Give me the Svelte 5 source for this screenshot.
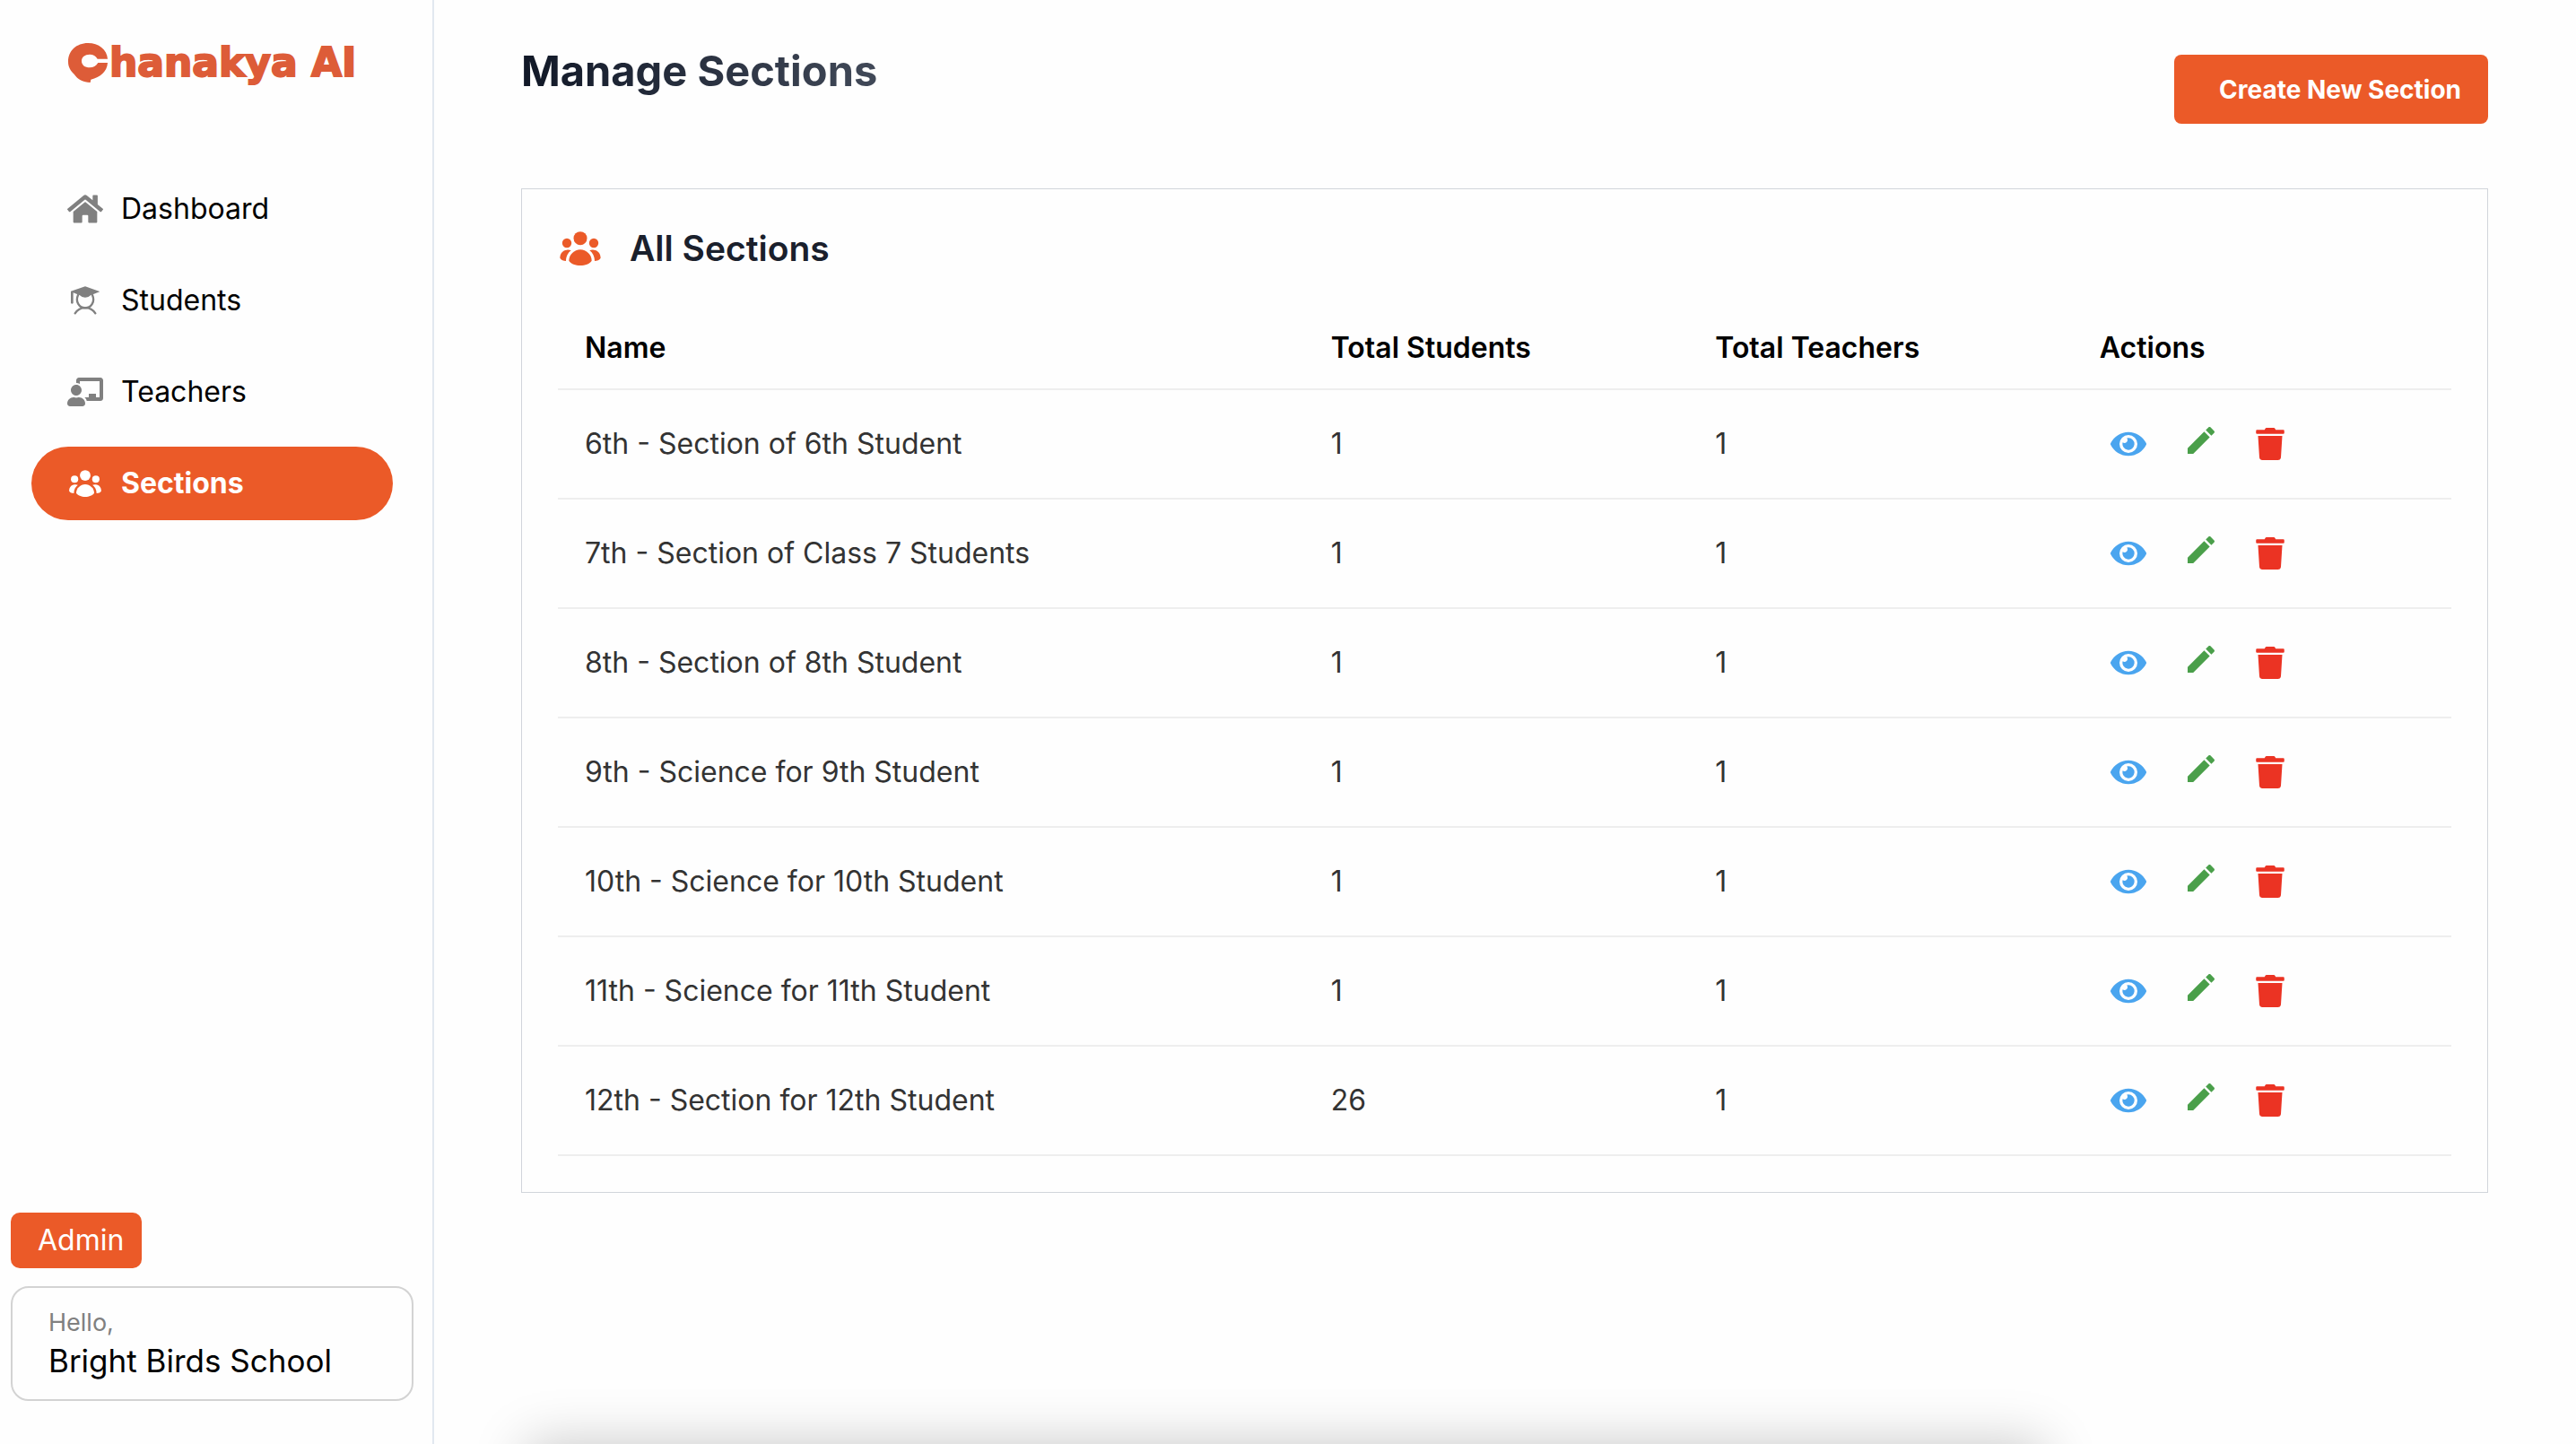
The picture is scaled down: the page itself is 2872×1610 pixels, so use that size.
<script>
  const nav = [
    { label: 'Dashboard', icon: 'home' },
    { label: 'Students', icon: 'student' },
    { label: 'Teachers', icon: 'teacher' },
    { label: 'Sections', icon: 'group', active: true },
  ];

  const sections = [
    { name: '6th - Section of 6th Student', students: 1, teachers: 1 },
    { name: '7th - Section of Class 7 Students', students: 1, teachers: 1 },
    { name: '8th - Section of 8th Student', students: 1, teachers: 1 },
    { name: '9th - Science for 9th Student', students: 1, teachers: 1 },
    { name: '10th - Science for 10th Student', students: 1, teachers: 1 },
    { name: '11th - Science for 11th Student', students: 1, teachers: 1 },
    { name: '12th - Section for 12th Student', students: 26, teachers: 1 },
  ];
</script>

{#snippet group()}
  <svg class="group" viewBox="0 0 136 114" fill="currentColor" aria-hidden="true">
    <circle cx="68" cy="23" r="22.5" />
    <circle cx="23" cy="39" r="15.5" />
    <circle cx="113" cy="39" r="15.5" />
    <path d="M68 61C48 61 30 78 30 98C36 108 52 114 68 114C84 114 100 108 106 98C106 78 88 61 68 61Z" />
    <path d="M37 64C33 62 28 61 23 62C9 63 0 74 0 89C4 96 12 98 20 99C20 84 27 71 37 64Z" />
    <path d="M99 64C103 62 108 61 113 62C127 63 136 74 136 89C132 96 124 98 116 99C116 84 109 71 99 64Z" />
  </svg>
{/snippet}

<div class="app">
  <aside class="sidebar">
    <a class="logo" href="#home" aria-label="Chanakya AI">
      <svg viewBox="0 0 132 132" aria-hidden="true">
        <path fill="#dd5c38" d="M66 0C28 0 0 26 0 62C0 80 8 92 20 104C32 122 50 130 74 132L76 122C108 114 130 96 132 66L100 66C94 76 84 82 72 82C56 82 45 74 45 60C45 47 56 38 72 38C84 38 92 43 98 53L132 53C130 22 102 0 66 0Z" />
      </svg>
      <span>hanakya AI</span>
    </a>

    <nav>
      {#each nav as item}
        <a href="#{item.label.toLowerCase()}" class:active={item.active} aria-current={item.active ? 'page' : undefined}>
          <span class="nav-icon">
            {#if item.icon === 'home'}
              <svg width="40" height="36" viewBox="0 0 576 512" fill="currentColor" aria-hidden="true"><path d="M280.37 148.26L96 300.11V464a16 16 0 0 0 16 16l112.06-.29a16 16 0 0 0 15.92-16V368a16 16 0 0 1 16-16h64a16 16 0 0 1 16 16v95.64a16 16 0 0 0 16 16.05L464 480a16 16 0 0 0 16-16V300L295.67 148.26a12.19 12.19 0 0 0-15.3 0zM571.6 251.47L488 182.56V44.05a12 12 0 0 0-12-12h-56a12 12 0 0 0-12 12v72.61L318.47 43a48 48 0 0 0-61 0L4.34 251.47a12 12 0 0 0-1.6 16.9l25.5 31A12 12 0 0 0 45.15 301l235.22-193.74a12.19 12.19 0 0 1 15.3 0L530.9 301a12 12 0 0 0 16.9-1.6l25.5-31a12 12 0 0 0-1.7-16.93z" /></svg>
            {:else if item.icon === 'student'}
              <svg width="32" height="32" viewBox="0 0 96 96" aria-hidden="true">
                <path fill="currentColor" d="M48 1L97 18L66 31Q60 38 48 38Q36 38 30 31L8 22V57Q4 62 0 57V17Z" />
                <g fill="none" stroke="currentColor" stroke-width="7" stroke-linecap="round">
                  <path d="M24 30C14 52 28 73 48 73S82 52 72 30" />
                  <path d="M14 91C30 66 66 66 82 91" />
                </g>
              </svg>
            {:else if item.icon === 'teacher'}
              <svg width="40" height="32" viewBox="0 0 640 512" fill="currentColor" aria-hidden="true"><path d="M208 352c-2.39 0-4.78.35-7.06 1.09C187.98 357.3 174.35 360 160 360c-14.35 0-27.98-2.7-40.95-6.91-2.28-.74-4.66-1.09-7.05-1.09C49.94 352-.33 402.48 0 464.62.14 490.88 21.73 512 48 512h224c26.27 0 47.86-21.12 48-47.38.33-62.14-49.94-112.62-112-112.62zm-48-32c53.02 0 96-42.98 96-96s-42.98-96-96-96-96 42.98-96 96 42.98 96 96 96zM592 0H208c-26.47 0-48 22.25-48 49.59V96c23.42 0 45.1 6.78 64 17.8V64h352v288h-64v-64H384v64h-76.24c19.1 16.69 33.12 38.73 39.69 64H592c26.47 0 48-22.25 48-49.59V49.59C640 22.25 618.47 0 592 0z" /></svg>
            {:else}
              {@render group()}
            {/if}
          </span>
          {item.label}
        </a>
      {/each}
    </nav>

    <div class="account">
      <span class="role">Admin</span>
      <div class="profile">
        <span class="hello">Hello,</span>
        <span class="school">Bright Birds School</span>
      </div>
    </div>
  </aside>

  <main>
    <header>
      <h1>Manage Sections</h1>
      <button class="create" type="button">Create New Section</button>
    </header>

    <section class="card">
      <h2>{@render group()}All Sections</h2>
      <table>
        <thead>
          <tr>
            <th class="name" scope="col">Name</th>
            <th class="count" scope="col">Total Students</th>
            <th class="count" scope="col">Total Teachers</th>
            <th scope="col">Actions</th>
          </tr>
        </thead>
        <tbody>
          {#each sections as row}
            <tr>
              <td>{row.name}</td>
              <td>{row.students}</td>
              <td>{row.teachers}</td>
              <td>
                <div class="actions">
                  <button class="view" type="button" aria-label="View {row.name}">
                    <svg width="40" height="36" viewBox="0 0 576 512" fill="currentColor" aria-hidden="true"><path d="M572.52 241.4C518.29 135.59 410.93 64 288 64S57.68 135.64 3.48 241.41a32.35 32.35 0 0 0 0 29.19C57.71 376.41 165.07 448 288 448s230.32-71.64 284.52-177.41a32.35 32.35 0 0 0 0-29.19zM288 400a144 144 0 1 1 144-144 143.93 143.93 0 0 1-144 144zm0-240a95.31 95.31 0 0 0-25.31 3.79 47.85 47.85 0 0 1-66.9 66.9A95.78 95.78 0 1 0 288 160z" /></svg>
                  </button>
                  <button class="edit" type="button" aria-label="Edit {row.name}">
                    <svg width="40" height="40" viewBox="0 0 24 24" fill="currentColor" aria-hidden="true"><path d="M3 17.25V21h3.75L17.81 9.94l-3.75-3.75L3 17.25zM20.71 7.04c.39-.39.39-1.02 0-1.41l-2.34-2.34c-.39-.39-1.02-.39-1.41 0l-1.83 1.83 3.75 3.75 1.83-1.83z" /></svg>
                  </button>
                  <button class="delete" type="button" aria-label="Delete {row.name}">
                    <svg width="32" height="36" viewBox="0 0 448 512" fill="currentColor" aria-hidden="true"><path d="M432 32H312l-9.4-18.7A24 24 0 0 0 281.1 0H166.8a23.72 23.72 0 0 0-21.4 13.3L136 32H16A16 16 0 0 0 0 48v32a16 16 0 0 0 16 16h416a16 16 0 0 0 16-16V48a16 16 0 0 0-16-16zM53.2 467a48 48 0 0 0 47.9 45h245.8a48 48 0 0 0 47.9-45L416 128H32z" /></svg>
                  </button>
                </div>
              </td>
            </tr>
          {/each}
        </tbody>
      </table>
    </section>
  </main>
</div>
<div class="drawer-shadow" aria-hidden="true"></div>

<style>
  :global(body) {
    margin: 0;
    background: #fefefe;
  }

  .app {
    display: flex;
    min-height: 100vh;
    font-family: Inter, 'Liberation Sans', sans-serif;
    font-size: 32px;
    line-height: 40px;
    color: #000;
  }

  .app * {
    box-sizing: border-box;
  }

  .sidebar {
    flex: none;
    display: flex;
    flex-direction: column;
    width: 484px;
    border-right: 2px solid #e2e8f0;
  }

  .logo {
    display: flex;
    align-items: center;
    gap: 2px;
    height: 140px;
    padding-left: 76px;
    color: #dd5c38;
    font: 700 44px/44px 'DejaVu Sans', sans-serif;
    text-decoration: none;
    white-space: nowrap;
    -webkit-text-stroke: 2px #dd5c38;
  }

  .logo svg {
    width: 44px;
    height: 44px;
  }

  nav {
    display: flex;
    flex-direction: column;
    gap: 20px;
    margin-top: 52px;
    padding: 0 44px 0 35px;
  }

  nav a {
    display: flex;
    align-items: center;
    gap: 20px;
    height: 82px;
    padding-left: 40px;
    border-radius: 41px;
    color: #000;
    text-decoration: none;
  }

  nav a.active {
    background: #eb5a28;
    color: #fff;
    font-weight: 700;
  }

  .nav-icon {
    display: flex;
    justify-content: center;
    width: 40px;
    color: #808080;
  }

  .active .nav-icon {
    color: #fff;
  }

  .nav-icon .group {
    width: 36px;
    height: 30px;
  }

  .account {
    display: flex;
    flex-direction: column;
    align-items: flex-start;
    gap: 20px;
    margin-top: auto;
    padding: 0 21px 48px 12px;
  }

  .role {
    padding: 11px 20px 11px 30px;
    border-radius: 10px;
    background: #eb5a28;
    color: #fff;
  }

  .profile {
    display: flex;
    flex-direction: column;
    width: 100%;
    padding: 19px 40px 21px;
    border: 2px solid #d3d3d3;
    border-radius: 20px;
  }

  .hello {
    color: #808080;
    font-size: 27px;
  }

  .school {
    font-size: 35px;
    line-height: 44px;
  }

  main {
    flex: 1;
    min-width: 0;
    padding: 48px 98px 48px 97px;
  }

  header {
    display: flex;
    justify-content: space-between;
    align-items: flex-start;
  }

  h1 {
    margin: 0;
    background: linear-gradient(90deg, #111827, #414958);
    background-clip: text;
    -webkit-background-clip: text;
    color: transparent;
    font-size: 47px;
    font-weight: 700;
    line-height: 62px;
  }

  .create {
    margin-top: 13px;
    padding: 19px 30px 18px 50px;
    border: 0;
    border-radius: 8px;
    background: #eb5a28;
    color: #fff;
    font: inherit;
    font-size: 28px;
    font-weight: 700;
  }

  .card {
    margin-top: 72px;
    padding: 40px;
    border: 1px solid #d1d5db;
  }

  h2 {
    display: flex;
    align-items: center;
    gap: 32px;
    margin: 0;
    padding-left: 2px;
    color: #1a202c;
    font-size: 39px;
    font-weight: 600;
    line-height: 52px;
  }

  h2 .group {
    width: 46px;
    height: 38px;
    color: #eb5a28;
  }

  table {
    width: 100%;
    margin-top: 38px;
    border-collapse: separate;
    border-spacing: 0;
    table-layout: fixed;
  }

  th,
  td {
    padding: 0 30px;
    border-bottom: 2px solid #eee;
    text-align: left;
  }

  th {
    height: 94px;
    padding-top: 2px;
    font-weight: 600;
  }

  th.name {
    width: 39.4%;
  }

  th.count {
    width: 20.3%;
  }

  td {
    height: 122px;
    color: #333;
  }

  .actions {
    display: flex;
    align-items: center;
    gap: 41px;
    padding-left: 12px;
  }

  .actions button {
    display: flex;
    padding: 0;
    border: 0;
    background: none;
  }

  .actions .view {
    color: #4aa5ef;
  }

  .actions .edit {
    padding-bottom: 8px;
    color: #4a9f4a;
  }

  .actions .delete {
    color: #eb3323;
  }

  .drawer-shadow {
    position: fixed;
    top: 100%;
    left: 587px;
    width: calc(75% - 462px);
    height: 200px;
    box-shadow: 0 0 56px rgba(0, 0, 0, 0.22);
  }
</style>
